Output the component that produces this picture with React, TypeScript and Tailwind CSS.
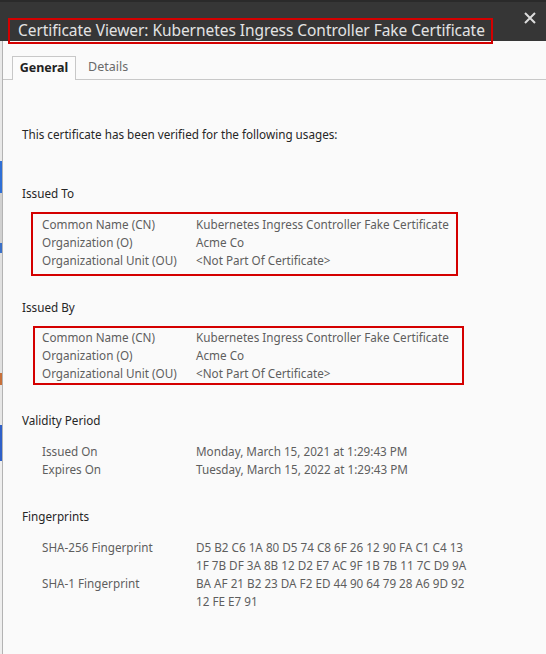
import React from "react";

const Row = ({ label, value }: { label: string; value: React.ReactNode }) => (
  <div className="flex whitespace-nowrap">
    <div className="w-[154px] shrink-0">{label}</div>
    <div>{value}</div>
  </div>
);

export default function App() {
  return (
    <div
      className="w-[546px] h-[654px] overflow-hidden bg-[#fafafa] flex flex-col"
      style={{ fontFamily: '"Noto Sans", "Open Sans", sans-serif' }}
    >
      <div className="h-[41px] shrink-0 bg-[#363636] border-t-2 border-[#2a2a2a] flex items-start pl-2 pt-[16px] pr-[10px]">
        <div className="relative z-10 h-[26px] border-2 border-[#d40000] pl-[8px] pr-[6px] flex items-center text-[#e3e3e3] text-[15.5px] leading-none tracking-[-0.06px] whitespace-nowrap">
          Certificate Viewer: Kubernetes Ingress Controller Fake Certificate
        </div>
        <div className="ml-auto mt-[-6px] text-[#d8d8d8]">
          <svg width="12" height="12" viewBox="0 0 12 12">
            <path d="M1 1 L11 11 M11 1 L1 11" stroke="#dcdcdc" strokeWidth="2" />
          </svg>
        </div>
      </div>
      <div className="flex flex-1">
        <div className="w-[2px] flex flex-col shrink-0">
          <div className="h-[120px] bg-[#e8e8e8]" />
          <div className="h-[32px] bg-[#2f6fd6]" />
          <div className="h-[50px] bg-[#d0d0d0]" />
          <div className="h-[10px] bg-[#3a70c8]" />
          <div className="h-[120px] bg-[#e0e0e0]" />
          <div className="h-[12px] bg-[#c8703a]" />
          <div className="h-[40px] bg-[#e6e6e6]" />
          <div className="h-[36px] bg-[#2f60c8]" />
          <div className="flex-1 bg-[#eeeeee]" />
        </div>
        <div className="w-px bg-[#b3b3b3] shrink-0" />
        <div className="flex-1 flex flex-col">
          <div className="mt-[15px] flex items-end border-b border-[#c8c8c8] h-[24px] pl-[9px]">
            <div className="h-[24px] w-[64px] border border-b-0 border-[#c8c8c8] bg-[#fcfcfc] flex items-center justify-center text-[12.5px] font-bold text-[#222] -mb-px pb-px">
              General
            </div>
            <div className="h-[23px] px-[12px] flex items-center text-[12.5px] text-[#6a6a6a]">
              Details
            </div>
          </div>
          <div className="pl-[19px] text-[11.7px] leading-[18px]">
            <div className="mt-[45px] text-[#262626]">
              This certificate has been verified for the following usages:
            </div>
            <div className="mt-[41px] text-[#262626]">Issued To</div>
            <div className="mt-[10px] ml-[9px] w-[427px] border-2 border-[#d40000] px-[9px] pt-[1px] pb-[5px] text-[#5e5e5e]">
              <Row label="Common Name (CN)" value="Kubernetes Ingress Controller Fake Certificate" />
              <Row label="Organization (O)" value="Acme Co" />
              <Row label="Organizational Unit (OU)" value="<Not Part Of Certificate>" />
            </div>
            <div className="mt-[22px] text-[#262626]">Issued By</div>
            <div className="mt-[10px] ml-[11px] w-[431px] border-2 border-[#d40000] px-[7px] pt-0 pb-[1px] text-[#5e5e5e]">
              <Row label="Common Name (CN)" value="Kubernetes Ingress Controller Fake Certificate" />
              <Row label="Organization (O)" value="Acme Co" />
              <Row label="Organizational Unit (OU)" value="<Not Part Of Certificate>" />
            </div>
            <div className="mt-[26px] text-[#262626]">Validity Period</div>
            <div className="mt-[13px] ml-[20px] text-[#5e5e5e]">
              <Row label="Issued On" value="Monday, March 15, 2021 at 1:29:43 PM" />
              <Row label="Expires On" value="Tuesday, March 15, 2022 at 1:29:43 PM" />
            </div>
            <div className="mt-[29px] text-[#262626]">Fingerprints</div>
            <div className="mt-[13px] ml-[20px] text-[#5e5e5e]">
              <Row
                label="SHA-256 Fingerprint"
                value={
                  <>
                    <div>D5 B2 C6 1A 80 D5 74 C8 6F 26 12 90 FA C1 C4 13</div>
                    <div>1F 7B DF 3A 8B 12 D2 E7 AC 9F 1B 7B 11 7C D9 9A</div>
                  </>
                }
              />
              <Row
                label="SHA-1 Fingerprint"
                value={
                  <>
                    <div>BA AF 21 B2 23 DA F2 ED 44 90 64 79 28 A6 9D 92</div>
                    <div>12 FE E7 91</div>
                  </>
                }
              />
            </div>
          </div>
        </div>
      </div>
    </div>
  );
}
